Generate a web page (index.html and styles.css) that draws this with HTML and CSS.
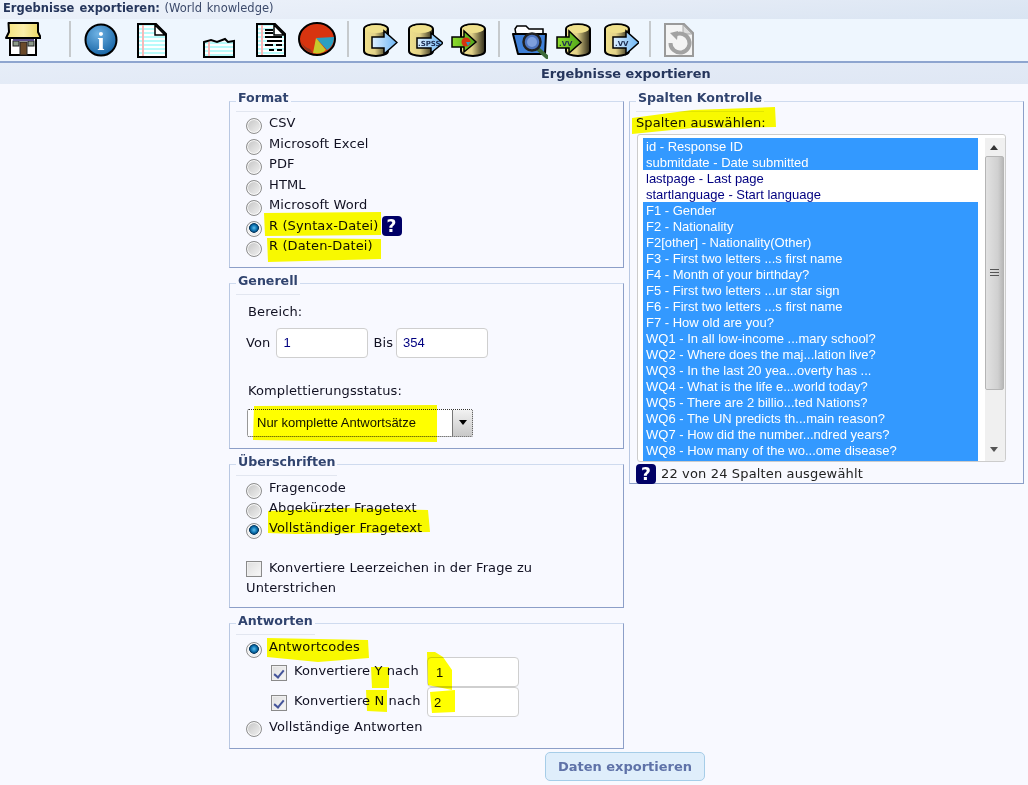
FILE: index.html
```html
<!DOCTYPE html>
<html lang="de">
<head>
<meta charset="utf-8">
<title>Ergebnisse exportieren</title>
<link rel="stylesheet" href="styles.css">
</head>
<body>
<svg class="defs" width="0" height="0" aria-hidden="true">
  <defs>
    <linearGradient id="cyl" x1="0" x2="1" y1="0" y2="0">
      <stop offset="0" stop-color="#f0e08c"/><stop offset=".45" stop-color="#e2d288"/><stop offset=".8" stop-color="#6d6540"/><stop offset="1" stop-color="#2e2a18"/>
    </linearGradient>
    <linearGradient id="blueArrow" x1="0" x2="1" y1="0" y2="0">
      <stop offset="0" stop-color="#dff0ff"/><stop offset="1" stop-color="#6db6f5"/>
    </linearGradient>
    <linearGradient id="greenArrow" x1="0" x2="1" y1="0" y2="0">
      <stop offset="0" stop-color="#8fdc2e"/><stop offset="1" stop-color="#4fa51a"/>
    </linearGradient>
    <radialGradient id="infoBall" cx=".4" cy=".3" r=".8">
      <stop offset="0" stop-color="#6fb2e4"/><stop offset="1" stop-color="#0d5c9e"/>
    </radialGradient>
    <linearGradient id="roof" x1="0" x2="1" y1="0" y2="0">
      <stop offset="0" stop-color="#f5e37e"/><stop offset=".5" stop-color="#fbeeaa"/><stop offset="1" stop-color="#e9d55f"/>
    </linearGradient>
    <pattern id="lines" width="4" height="4" patternUnits="userSpaceOnUse">
      <rect width="4" height="4" fill="#fff"/><rect width="4" height="2" y="1" fill="#b8fbfb"/>
    </pattern>
    <symbol id="db-left" viewBox="0 0 36 34">
      <path d="M2 6C2 -0.5 26 -0.5 26 6V28C26 34.500 2 34.500 2 28Z" fill="url(#cyl)" stroke="#000" stroke-width="2"/>
      <ellipse cx="14" cy="6" rx="11" ry="4" fill="#efe08b"/>
    </symbol>
    <symbol id="db-right" viewBox="0 0 36 34">
      <path d="M10 6C10 -0.5 34 -0.5 34 6V28C34 34.500 10 34.500 10 28Z" fill="url(#cyl)" stroke="#000" stroke-width="2"/>
      <ellipse cx="22" cy="6" rx="11" ry="4" fill="#efe08b"/>
    </symbol>
  </defs>
</svg>

<header class="topbar"><b>Ergebnisse exportieren:</b> (World knowledge)</header>

<nav class="toolbar">
  <svg class="icon i-home" width="36" height="34" viewBox="0 0 36 34">
    <rect x="5" y="16" width="26" height="17" fill="#fff" stroke="#000" stroke-width="2"/>
    <rect x="15" y="20" width="7" height="13" fill="#6b4a2a" stroke="#222"/>
    <rect x="8" y="19" width="6" height="5" fill="#8d9a8a" stroke="#222"/>
    <rect x="23" y="19" width="6" height="5" fill="#8d9a8a" stroke="#222"/>
    <rect x="8" y="17" width="21" height="2" fill="#5b4f8a"/>
    <path d="M3.500 1H33L33 10L36 16H1L4 10Z" fill="url(#roof)" stroke="#000" stroke-width="2" stroke-linejoin="round"/>
  </svg>
  <i class="sep s-1"></i>
  <svg class="icon i-info" width="34" height="34" viewBox="0 0 34 34">
    <circle cx="17" cy="17" r="15.500" fill="url(#infoBall)" stroke="#000" stroke-width="2"/>
    <text class="info-i" x="17" y="27" text-anchor="middle">i</text>
  </svg>
  <svg class="icon i-page" width="30" height="35" viewBox="0 0 30 35">
    <path d="M1 1H19L29 11V34H1Z" fill="url(#lines)" stroke="#000" stroke-width="2"/>
    <rect x="5" y="2" width="2" height="31" fill="#f6b9b9"/>
    <path d="M18 2V12H28Z" fill="#fff" stroke="#000" stroke-width="1.500"/>
  </svg>
  <svg class="icon i-short" width="32" height="21" viewBox="0 0 32 21">
    <path d="M1 5L8 3L14 5L22 2L25 5L31 4V20H1Z" fill="url(#lines)" stroke="#000" stroke-width="2"/>
    <rect x="5" y="5" width="2" height="14" fill="#f6b9b9"/>
  </svg>
  <svg class="icon i-data" width="30" height="34" viewBox="0 0 30 34">
    <path d="M1 1H19L29 11V33H1Z" fill="url(#lines)" stroke="#000" stroke-width="2"/>
    <rect x="5" y="2" width="2" height="30" fill="#f6b9b9"/>
    <path d="M18 2V12H28Z" fill="#fff" stroke="#000" stroke-width="1.500"/>
    <path d="M9 7H17M9 10H17M9 14H26M11 18H26M9 22H17M20 22H26M13 27H18M21 27H26" stroke="#000" stroke-width="2"/>
  </svg>
  <svg class="icon i-pie" width="38" height="34" viewBox="0 0 38 34">
    <ellipse cx="19" cy="17" rx="18" ry="16" fill="#d8340f" stroke="#000" stroke-width="2"/>
    <path d="M18 16L36 15C36 21 33 26 29 28Z" fill="#2b9fc0"/>
    <path d="M18 16L28 28C25 31 21 32 15 31Z" fill="#c8c82c"/>
    <path d="M3 20C6 27 11 31 15 31L12 27C8 26 5 23 3 20Z" fill="#8c3a22"/>
  </svg>
  <i class="sep s-2"></i>
  <svg class="icon i-db1" width="36" height="34" viewBox="0 0 36 34">
    <use href="#db-left"/>
    <path d="M10 14H22V8L35 19.500L22 31V25H10Z" fill="url(#blueArrow)" stroke="#000" stroke-width="1.500"/>
  </svg>
  <svg class="icon i-db2" width="36" height="34" viewBox="0 0 36 34">
    <use href="#db-left"/>
    <path d="M10 15H24V10L36 20L24 30V25H10Z" fill="url(#blueArrow)" stroke="#000" stroke-width="1.500"/>
    <text class="db-label" x="11" y="23">.SPSS</text>
  </svg>
  <svg class="icon i-db3" width="36" height="34" viewBox="0 0 36 34">
    <use href="#db-right"/>
    <path d="M1 14H13V8L25 19L13 29V24H1Z" fill="url(#greenArrow)" stroke="#000" stroke-width="1.500"/>
    <circle cx="15" cy="19" r="4.500" fill="#d8340f"/>
    <path d="M15 19H19.500L17 23Z" fill="#2b9fc0"/>
  </svg>
  <i class="sep s-3"></i>
  <svg class="icon i-folder" width="36" height="36" viewBox="0 0 36 36">
    <path d="M3 6L5 3H14L17 6H31V28H7Z" fill="#fff" stroke="#000" stroke-width="1.500"/>
    <path d="M1 11H34L33 31H6Z" fill="#3f80d8" stroke="#000" stroke-width="2" stroke-linejoin="round"/>
    <path d="M26 26L35 34" stroke="#3c6a3a" stroke-width="4" stroke-linecap="round"/>
    <circle cx="20" cy="19" r="8.500" fill="#4d74bf" stroke="#222" stroke-width="2.500"/>
    <circle cx="20" cy="19" r="5" fill="#7e9fdc"/>
  </svg>
  <svg class="icon i-db4" width="36" height="34" viewBox="0 0 36 34">
    <use href="#db-right"/>
    <path d="M1 14H13V8L25 19.500L13 30V25H1Z" fill="url(#greenArrow)" stroke="#000" stroke-width="1.500"/>
    <text class="db-label" x="3" y="23">.VV</text>
  </svg>
  <svg class="icon i-db5" width="36" height="34" viewBox="0 0 36 34">
    <use href="#db-left"/>
    <path d="M10 14H23V8L36 19.500L23 31V25H10Z" fill="url(#blueArrow)" stroke="#000" stroke-width="1.500"/>
    <text class="db-label" x="12" y="23">.VV</text>
  </svg>
  <i class="sep s-4"></i>
  <svg class="icon i-reload" width="30" height="34" viewBox="0 0 30 34">
    <path d="M1 1H20L29 10V33H1Z" fill="#f4f4f4" stroke="#9a9a9a" stroke-width="2"/>
    <path d="M19 2V11H28Z" fill="#ddd" stroke="#aaa"/>
    <path d="M11 12A9.500 9.500 0 1 1 6.500 20" fill="none" stroke="#a2a2a2" stroke-width="4"/>
    <path d="M6 10L14 8L13 17Z" fill="#a2a2a2"/>
  </svg>
</nav>

<h1 class="subheader">Ergebnisse exportieren</h1>

<main class="page">
  <div class="columns">
    <div class="col-left">
      <fieldset class="box box-format">
        <legend>Format</legend>
        <label class="row"><input class="radio" type="radio" name="format">CSV</label>
        <label class="row"><input class="radio" type="radio" name="format">Microsoft Excel</label>
        <label class="row"><input class="radio" type="radio" name="format">PDF</label>
        <label class="row"><input class="radio" type="radio" name="format">HTML</label>
        <label class="row"><input class="radio" type="radio" name="format">Microsoft Word</label>
        <label class="row"><input class="radio" type="radio" name="format" checked>R (Syntax-Datei)<span class="help help-inline">?</span></label>
        <label class="row"><input class="radio" type="radio" name="format">R (Daten-Datei)</label>
      </fieldset>

      <fieldset class="box box-general">
        <legend>Generell</legend>
        <div class="range-title">Bereich:</div>
        <div class="range">
          <span>Von</span><input class="field field-navy field-from" type="text" value="1">
          <span>Bis</span><input class="field field-navy field-to" type="text" value="354">
        </div>
        <div class="status-title">Komplettierungsstatus:</div>
        <div class="selectbox">
          <span class="select-text">Nur komplette Antwortsätze</span>
          <span class="select-btn"><i></i></span>
        </div>
      </fieldset>

      <fieldset class="box box-heads">
        <legend>Überschriften</legend>
        <label class="row row-tight row-first"><input class="radio" type="radio" name="heads">Fragencode</label>
        <label class="row row-tight"><input class="radio" type="radio" name="heads">Abgekürzter Fragetext</label>
        <label class="row row-tight"><input class="radio" type="radio" name="heads" checked>Vollständiger Fragetext</label>
        <label class="wrapcheck"><input class="check" type="checkbox">Konvertiere Leerzeichen in der Frage zu Unterstrichen</label>
      </fieldset>

      <fieldset class="box box-answers">
        <legend>Antworten</legend>
        <label class="row row-codes"><input class="radio" type="radio" name="ans" checked>Antwortcodes</label>
        <div class="convert convert-first">
          <label class="convert-label"><input class="check" type="checkbox" checked>Konvertiere Y nach</label>
          <input class="field field-black field-one" type="text" value="1">
        </div>
        <div class="convert">
          <label class="convert-label"><input class="check" type="checkbox" checked>Konvertiere N nach</label>
          <input class="field field-black" type="text" value="2">
        </div>
        <label class="row row-full"><input class="radio" type="radio" name="ans">Vollständige Antworten</label>
      </fieldset>
    </div>

    <div class="col-right">
      <fieldset class="box box-columns">
        <legend>Spalten Kontrolle</legend>
        <div class="columns-title">Spalten auswählen:</div>
        <div class="listbox">
          <ul class="options">
            <li class="on">id - Response ID</li>
            <li class="on">submitdate - Date submitted</li>
            <li>lastpage - Last page</li>
            <li>startlanguage - Start language</li>
            <li class="on">F1 - Gender</li>
            <li class="on">F2 - Nationality</li>
            <li class="on">F2[other] - Nationality(Other)</li>
            <li class="on">F3 - First two letters ...s first name</li>
            <li class="on">F4 - Month of your birthday?</li>
            <li class="on">F5 - First two letters ...ur star sign</li>
            <li class="on">F6 - First two letters ...s first name</li>
            <li class="on">F7 - How old are you?</li>
            <li class="on">WQ1 - In all low-income ...mary school?</li>
            <li class="on">WQ2 - Where does the maj...lation live?</li>
            <li class="on">WQ3 - In the last 20 yea...overty has ...</li>
            <li class="on">WQ4 - What is the life e...world today?</li>
            <li class="on">WQ5 - There are 2 billio...ted Nations?</li>
            <li class="on">WQ6 - The UN predicts th...main reason?</li>
            <li class="on">WQ7 - How did the number...ndred years?</li>
            <li class="on">WQ8 - How many of the wo...ome disease?</li>
            <li class="on clip">WQ9 - Worldwide, 30 ...go to school?</li>
          </ul>
          <div class="scrollbar">
            <span class="arrow arrow-up"></span>
            <span class="thumb"><i></i></span>
            <span class="arrow arrow-down"></span>
          </div>
        </div>
        <div class="count"><span class="help">?</span>22 von 24 Spalten ausgewählt</div>
      </fieldset>
    </div>
  </div>
  <div class="actions"><button class="export" type="button">Daten exportieren</button></div>
</main>

<svg class="marker" width="1028" height="785" viewBox="0 0 1028 785" aria-hidden="true">
  <path d="M632 118L692 110L775 107L776 127L692 128L632 134Z"/>
  <path d="M264 213L381 212L381 235L265 236Z"/>
  <path d="M267 238L381 239L381 259L268 262Z"/>
  <path d="M254 406L437 405L437 442L320 441L253 440Z"/>
  <path d="M268 511L342 508L428 510L430 532L295 534L268 533Z"/>
  <path d="M267 638L368 640L369 658L318 662L267 657Z"/>
  <path d="M427 652L435 652L443 657L452 670L452 690L428 685Z"/>
  <path d="M430 692L455 690L455 712L432 713Z"/>
  <path d="M371 667L389 667L389 688L372 688Z"/>
  <path d="M366 690L387 690L387 712L367 711Z"/>
</svg>
</body>
</html>
```
FILE: styles.css
```css
* { box-sizing: border-box; }
html, body { margin: 0; padding: 0; }
body {
  position: relative;
  width: 1028px;
  height: 785px;
  overflow: hidden;
  background: #f8f9ff;
  color: #111122;
  font: 13px/20px "DejaVu Sans", Verdana, sans-serif;
  letter-spacing: .12px;
}
.defs { position: absolute; }

.topbar {
  height: 19px;
  padding-left: 3px;
  font-size: 11.500px;
  line-height: 16px;
  color: #3c4a6b;
  letter-spacing: 0;
  word-spacing: 1px;
  background: linear-gradient(176deg, #eef3fb 0%, #e4ebf6 55%, #d9e4f2 100%);
}
.topbar b { color: #26365c; }

.toolbar {
  display: flex;
  align-items: flex-start;
  height: 44px;
  background: #eef6fe;
  border-bottom: 2px solid #8ea5cf;
}
.icon { flex: none; margin-top: 4px; }
.sep { flex: none; width: 2px; height: 36px; margin-top: 2px; background: #c6cacd; }
.i-home { margin-left: 5px; margin-top: 3px; }
.s-1 { margin-left: 28px; }
.i-info { margin-left: 13px; }
.i-page { margin-left: 19px; }
.i-short { margin-left: 36px; margin-top: 18px; }
.i-data { margin-left: 21px; }
.i-pie { margin-left: 12px; margin-top: 3px; }
.s-2 { margin-left: 11px; }
.i-db1 { margin-left: 13px; }
.i-db2 { margin-left: 9px; }
.i-db3 { margin-left: 8px; }
.s-3 { margin-left: 11px; }
.i-folder { margin-left: 12px; }
.i-db4 { margin-left: 8px; }
.i-db5 { margin-left: 11px; }
.s-4 { margin-left: 10px; }
.i-reload { margin-left: 13px; }
.info-i { font: bold 26px "Liberation Serif", serif; fill: #fff; }
.db-label { font: bold 7px "DejaVu Sans", sans-serif; fill: #1c2c50; letter-spacing: 0; }

.subheader {
  height: 21px;
  margin: 0;
  padding-left: 541px;
  font-size: 12.900px;
  line-height: 21px;
  font-weight: bold;
  letter-spacing: 0;
  color: #26365c;
  background: linear-gradient(178deg, #e6edf8 0%, #dfe7f4 100%);
}

.page { padding: 6px 0 0 229px; }
.columns { display: flex; gap: 5px; }
.col-left { display: flex; flex-direction: column; gap: 5px; width: 395px; }
.col-right { width: 395px; }

.box {
  margin: 0;
  min-width: 0;
  padding: 0 0 0 16px;
  border: 1px solid #8c9fc8;
  border-top-color: #cfdbef;
  border-left-color: #b9c8e2;
}
.box legend {
  margin-left: -10px;
  padding: 0 2px;
  height: 22px;
  font-size: 12.600px;
  line-height: 15px;
  font-weight: bold;
  letter-spacing: 0;
  color: #31446f;
  border-bottom: 1px solid #e2e6f0;
}

.row {
  display: flex;
  height: 20.500px;
  line-height: 22px;
}
.radio {
  appearance: none;
  flex: none;
  width: 16px;
  height: 16px;
  margin: 6px 7px 0 0;
  border: 1px solid #8e8e8e;
  border-radius: 50%;
  background: linear-gradient(135deg, #c4c4c4, #f2f2f2);
  box-shadow: inset 0 0 0 1px #f8f8f8;
}
.radio:checked {
  background: radial-gradient(circle at 50% 42%, #5fc0ee 0, #0a6fae 28%, #06375e 43%, #f2f2f2 48%, #dadada 100%);
}
.help {
  display: inline-block;
  flex: none;
  width: 20px;
  height: 20px;
  border-radius: 4px;
  background: #000066;
  color: #fff;
  font: bold 17px/20px "DejaVu Sans", sans-serif;
  text-align: center;
}
.help-inline { margin-left: 3px; margin-top: 1px; }

.box-format { padding-bottom: 11px; }

.box-general { height: 176px; }
.range-title { margin: 7px 0 0 2px; }
.range { display: flex; align-items: center; margin-top: 6px; height: 30px; }
.field {
  width: 92px;
  height: 30px;
  border: 1px solid #cfcfcf;
  border-radius: 4px;
  background: #fff;
  padding: 0 6px;
  font: 13px "Liberation Sans", Arial, sans-serif;
  letter-spacing: 0;
  outline: none;
}
.field-navy { color: #000080; }
.field-from { margin: 0 5px 0 6px; }
.field-to { margin-left: 3px; }
.status-title { margin: 23px 0 0 2px; }
.selectbox {
  display: flex;
  width: 226px;
  height: 28px;
  margin: 8px 0 0 1px;
  background: #fff;
  border: 1px dotted #333;
  border-radius: 2px;
  font: 13px/26px "Liberation Sans", Arial, sans-serif;
  letter-spacing: 0;
  color: #111;
}
.select-text { flex: 1; padding-left: 9px; }
.select-btn {
  display: flex;
  align-items: center;
  justify-content: center;
  width: 20px;
  background: linear-gradient(#f2f2f2, #c8c8c8);
  border-left: 1px solid #777;
}
.select-btn i { border: 4px solid transparent; border-top: 5px solid #000; border-bottom: 0; }

.box-heads { height: 154px; }
.row-tight { height: 20.300px; }
.row-first { margin-top: 1px; }
.wrapcheck { display: block; margin-top: 20.500px; width: 320px; line-height: 20px; }
.check {
  appearance: none;
  display: inline-block;
  width: 16px;
  height: 16px;
  margin: 0 7px 0 0;
  vertical-align: -5px;
  border: 1px solid #8a8a8a;
  background: linear-gradient(135deg, #dedede, #f8f8f8);
  box-shadow: inset 0 0 0 1px #efefef;
}
.check:checked { position: relative; }
.check:checked::after {
  content: "";
  position: absolute;
  left: 4px;
  top: 2px;
  width: 4px;
  height: 8px;
  border: solid #44549a;
  border-width: 0 2px 2px 0;
  transform: rotate(40deg);
}

.box-answers { height: 136px; }
.row-codes { margin-top: 1px; }
.convert { display: flex; height: 30px; padding-left: 25px; }
.convert-first { margin-top: 1px; }
.convert-label { width: 156px; line-height: 20px; padding-top: 4px; white-space: nowrap; }
.convert .check { vertical-align: -6px; }
.field-black { color: #111; }
.field-one { padding-left: 8px; }
.row-full { margin-top: -2px; line-height: 24px; }

.box-columns { height: 394px; padding-left: 6px; }
.box-columns legend { margin-left: 0; }
.columns-title { height: 22px; line-height: 22px; }
.listbox {
  display: flex;
  width: 369px;
  height: 328px;
  margin-left: 1px;
  padding: 3px 0 0 5px;
  overflow: hidden;
  background: #fff;
  border: 1px solid #cccccc;
  border-radius: 3px;
}
.options {
  flex: none;
  width: 335px;
  margin: 0;
  padding: 0;
  list-style: none;
  font: 13px/18px "Liberation Sans", Arial, sans-serif;
  letter-spacing: 0;
  color: #000080;
}
.options li { height: 16px; padding-left: 3px; white-space: nowrap; overflow: hidden; }
.options li.on { background: #3399ff; color: #fff; }
.options li.clip { height: 4px; }
.scrollbar {
  position: relative;
  flex: none;
  width: 20px;
  height: 324px;
  margin-left: 7px;
  background: #f0f0f0;
}
.arrow { position: absolute; left: 5px; border: 4px solid transparent; }
.arrow-up { top: 7px; border-bottom: 5px solid #333; border-top: 0; }
.arrow-down { bottom: 10px; border-top: 5px solid #555; border-bottom: 0; }
.thumb {
  position: absolute;
  left: 0;
  top: 18px;
  width: 19px;
  height: 234px;
  display: flex;
  align-items: center;
  justify-content: center;
  border: 1px solid #b5b5b5;
  border-radius: 2px;
  background: linear-gradient(90deg, #e2e2e2, #d0d0d0 70%, #b8b8b8);
}
.thumb i {
  width: 9px;
  height: 9px;
  background: repeating-linear-gradient(#555 0 1px, transparent 1px 3px);
}
.count { display: flex; gap: 5px; height: 20px; margin-top: 2px; line-height: 20px; color: #222; letter-spacing: .15px; }

.actions { padding-left: 316px; margin-top: 3px; }
.export {
  display: block;
  width: 160px;
  height: 29px;
  padding: 0;
  border: 1px solid #a6cde8;
  border-radius: 5px;
  background: #dfeefb;
  color: #5f72a8;
  font: bold 13px "DejaVu Sans", sans-serif;
}

.marker { position: absolute; left: 0; top: 0; pointer-events: none; mix-blend-mode: multiply; }
.marker path { fill: #ffff00; }
```
